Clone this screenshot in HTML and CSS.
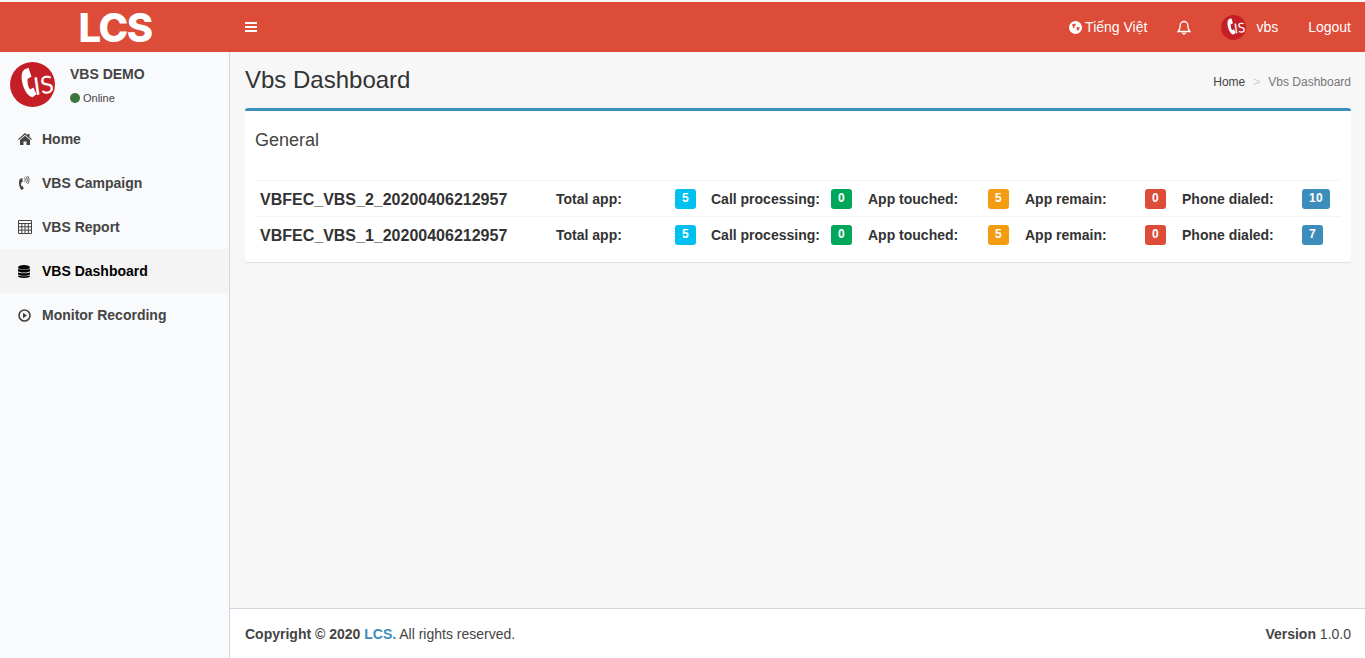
FILE: index.html
```html
<!DOCTYPE html>
<html lang="vi">
<head>
<meta charset="utf-8">
<title>Vbs Dashboard</title>
<link rel="stylesheet" href="styles.css">
</head>
<body>
<header class="topbar">
  <div class="brand">LCS</div>
  <div class="nav">
    <svg class="burger" width="12" height="12" viewBox="0 0 12 12"><path d="M0 1h12v2H0zM0 5h12v2H0zM0 9h12v2H0z" fill="#fff"/></svg>
    <div class="nav-right">
      <a class="nav-link lang">
        <svg width="13" height="13" viewBox="0 0 13 13"><circle cx="6.500" cy="6.500" r="6.500" fill="#fff"/><path d="M3 3.500l3-1 1 1.500-2 1.500 1 1-1.500 1zM8 6l3 .5-2 3.500-1.500-2z" fill="#dd4b39"/></svg>
        Tiếng Việt
      </a>
      <a class="nav-link bell">
        <svg width="14" height="15" viewBox="0 0 14 15"><path d="M7 1.500a3.800 3.800 0 0 0-3.800 3.800c0 3.700-1 5-2 6.200h11.600c-1-1.200-2-2.500-2-6.200A3.800 3.800 0 0 0 7 1.500zM5.500 12.500a1.500 1.500 0 0 0 3 0" fill="none" stroke="#fff" stroke-width="1.300"/></svg>
      </a>
      <a class="nav-link user">
        <svg width="25" height="25" viewBox="0 0 46 46"><circle cx="23" cy="23" r="23" fill="#c41e26"/><path d="M14 8l5-2 3 9-4 2c-.5 4 .5 8 2.500 11l3.500-2 3 7-4 3c-6-1-10-10-11-18-.5-4 0-8 2.500-10z" fill="#fff"/><text x="24" y="33" class="lis-text" transform="rotate(-8 32 25)">IS</text></svg>
        vbs
      </a>
      <a class="nav-link logout">Logout</a>
    </div>
  </div>
</header>
<div class="shell">
  <aside class="sidebar">
    <div class="user-panel">
      <svg class="avatar" width="45" height="45" viewBox="0 0 46 46"><circle cx="23" cy="23" r="23" fill="#c41e26"/><path d="M14 8l5-2 3 9-4 2c-.5 4 .5 8 2.500 11l3.500-2 3 7-4 3c-6-1-10-10-11-18-.5-4 0-8 2.500-10z" fill="#fff"/><text x="24" y="33" class="lis-text" transform="rotate(-8 32 25)">IS</text></svg>
      <div class="user-info">
        <div class="user-name">VBS DEMO</div>
        <div class="user-status"><span class="dot"></span>Online</div>
      </div>
    </div>
    <nav class="menu">
      <a class="menu-item">
        <svg height="12" viewBox="0 0 14 12"><path d="M7 0l2.500 2.200V1h2v3l2.500 2.300-.7.700L7 1.700.7 7 0 6.300zM2 7l5-4.200L12 7v5H8.500V8.500h-3V12H2z" fill="#444"/></svg>
        Home
      </a>
      <a class="menu-item">
        <svg height="14" viewBox="0 0 14 14"><path d="M4.500 2L1.800 3C.4 6 .8 10.500 3.500 14l2.300-1.200-1.300-3-1.100.4c-.5-1.300-.5-2.700-.1-4l1.300-.3z" fill="#444"/><path d="M6.500 1.500c.9 1 .9 3 0 4M8 .5c1.600 1.500 1.600 5 0 6.500M9.500 0c2 2 2 6 0 8" fill="none" stroke="#444" stroke-width=".9"/></svg>
        VBS Campaign
      </a>
      <a class="menu-item">
        <svg height="14" viewBox="0 0 14 14"><path d="M.5.500h13v13H.5zM.5 3.500h13M.5 6.800h13M.5 10.100h13M3.800 3.500v10M7 3.500v10M10.300 3.500v10" fill="none" stroke="#444"/></svg>
        VBS Report
      </a>
      <a class="menu-item active">
        <svg height="13" viewBox="0 0 14 13" preserveAspectRatio="xMinYMid"><ellipse cx="6" cy="2.300" rx="6" ry="2.300"/><path d="M0 3.800c1 1.400 11 1.400 12 0v1.900c0 1-2.500 1.900-6 1.900S0 6.700 0 5.700zM0 7.200c1 1.400 11 1.400 12 0v1.700c0 1-2.500 1.800-6 1.800S0 9.900 0 8.900zM0 10.200c1 1.400 11 1.400 12 0v.7c0 1.100-2.500 2-6 2s-6-.9-6-2z"/></svg>
        VBS Dashboard
      </a>
      <a class="menu-item">
        <svg height="13" viewBox="0 0 14 13" preserveAspectRatio="xMinYMid"><circle cx="6.500" cy="6.500" r="5.500" fill="none" stroke="#444" stroke-width="1.600"/><path d="M5 3.800l4 2.700-4 2.700z" fill="#444"/></svg>
        Monitor Recording
      </a>
    </nav>
  </aside>
  <div class="main">
    <main class="content">
      <div class="page-head">
        <h1>Vbs Dashboard</h1>
        <div class="crumbs"><span class="crumb-home">Home</span><span class="crumb-sep">&gt;</span><span>Vbs Dashboard</span></div>
      </div>
      <section class="box">
        <h2>General</h2>
        <div class="rows">
          <div class="row">
            <div class="row-name">VBFEC_VBS_2_20200406212957</div>
            <div class="stat"><span class="label">Total app:</span><span class="badge cyan">5</span></div>
            <div class="stat"><span class="label">Call processing:</span><span class="badge green">0</span></div>
            <div class="stat"><span class="label">App touched:</span><span class="badge orange">5</span></div>
            <div class="stat"><span class="label">App remain:</span><span class="badge red">0</span></div>
            <div class="stat"><span class="label">Phone dialed:</span><span class="badge blue">10</span></div>
          </div>
          <div class="row">
            <div class="row-name">VBFEC_VBS_1_20200406212957</div>
            <div class="stat"><span class="label">Total app:</span><span class="badge cyan">5</span></div>
            <div class="stat"><span class="label">Call processing:</span><span class="badge green">0</span></div>
            <div class="stat"><span class="label">App touched:</span><span class="badge orange">5</span></div>
            <div class="stat"><span class="label">App remain:</span><span class="badge red">0</span></div>
            <div class="stat"><span class="label">Phone dialed:</span><span class="badge blue">7</span></div>
          </div>
        </div>
      </section>
    </main>
    <footer class="footer">
      <div><b>Copyright © 2020 <span class="accent">LCS.</span></b> All rights reserved.</div>
      <div><b>Version</b> 1.0.0</div>
    </footer>
  </div>
</div>
</body>
</html>
```
FILE: styles.css
```css
* { box-sizing: border-box; }
html, body { height: 100%; }
body {
  margin: 0;
  height: 658px;
  overflow: hidden;
  display: flex;
  flex-direction: column;
  padding-top: 2px;
  background: #f7f7f7;
  font-family: "Liberation Sans", Arial, sans-serif;
  font-size: 14px;
  color: #333;
}
.lis-text { font: 400 25px "Lato", "Liberation Sans", sans-serif; fill: #fff; }
.topbar { display: flex; height: 50px; flex: none; background: #dd4b39; color: #fff; }
.brand {
  width: 230px;
  padding-top: 2px;
  text-align: center;
  font: 800 40px/48px "Inter", "Liberation Sans", sans-serif;
  letter-spacing: -1.500px;
  color: #fff;
}
.nav { flex: 1; display: flex; align-items: center; padding: 0 14px 0 15px; }
.burger { display: block; }
.nav-right { margin-left: auto; display: flex; align-items: center; }
.nav-link { display: flex; align-items: center; font-size: 14px; color: #fff; }
.lang { gap: 3px; margin-right: 30px; }
.bell { margin-right: 30px; }
.user { gap: 10px; margin-right: 30px; }
.shell { flex: 1; display: flex; min-height: 0; }
.sidebar { width: 230px; flex: none; background: #f9fafc; border-right: 1px solid #d2d6de; }
.user-panel { display: flex; padding: 10px 10px 0; height: 65px; }
.avatar { flex: none; }
.user-info { margin-left: 15px; }
.user-name { margin-top: 4px; font-weight: 700; font-size: 14px; line-height: 16px; color: #444; }
.user-status { margin-top: 9px; display: flex; align-items: center; font-size: 11px; line-height: 14px; color: #444; }
.dot { width: 10px; height: 10px; border-radius: 50%; background: #3c763d; margin-right: 3px; }
.menu { display: flex; flex-direction: column; }
.menu-item {
  height: 44px;
  display: flex;
  align-items: center;
  padding-left: 18px;
  font-weight: 700;
  font-size: 14px;
  color: #444;
}
.menu-item svg { width: 14px; margin-right: 10px; flex: none; }
.menu-item.active { background: #f4f4f5; color: #000; }
.main { flex: 1; display: flex; flex-direction: column; min-width: 0; }
.content { flex: 1; padding: 0 14px 0 15px; }
.page-head { display: flex; align-items: center; justify-content: space-between; height: 56px; }
h1 { margin: 0; font-size: 24px; font-weight: 400; line-height: 56px; color: #333; }
.crumbs { display: flex; font-size: 12px; color: #777; margin-top: 3px; }
.crumb-home { color: #444; }
.crumb-sep { margin: 0 8px; color: #ccc; }
.box {
  background: #fff;
  border-top: 3px solid #3c8dbc;
  border-radius: 3px;
  box-shadow: 0 1px 1px rgba(0,0,0,.1);
  padding: 0 10px;
  height: 154px;
}
h2 { margin: 0; height: 69px; padding-top: 19px; font-size: 18px; line-height: 20px; font-weight: 400; color: #444; }
.row {
  display: grid;
  grid-template-columns: 301px 155px repeat(4, 157px);
  align-items: center;
  height: 36px;
  border-top: 1px solid #f4f4f4;
}
.row-name { padding: 2px 0 0 5px; font-weight: 700; font-size: 16px; color: #333; }
.stat { display: flex; align-items: center; }
.label { width: 120px; font-weight: 700; font-size: 14px; color: #333; }
.stat:nth-child(2) .label { width: 119px; }
.badge {
  min-width: 21px;
  height: 20px;
  padding: 0 7px;
  border-radius: 3px;
  text-align: center;
  color: #fff;
  font-weight: 700;
  font-size: 12px;
  letter-spacing: .3px;
  line-height: 18px;
}
.cyan { background: #00c0ef; }
.green { background: #00a65a; }
.orange { background: #f39c12; }
.red { background: #dd4b39; }
.blue { background: #3c8dbc; }
.footer {
  flex: none;
  height: 50px;
  display: flex;
  align-items: center;
  justify-content: space-between;
  padding: 0 14px 0 15px;
  background: #fff;
  border-top: 1px solid #d2d6de;
  color: #444;
}
.accent { color: #3c8dbc; }
```
